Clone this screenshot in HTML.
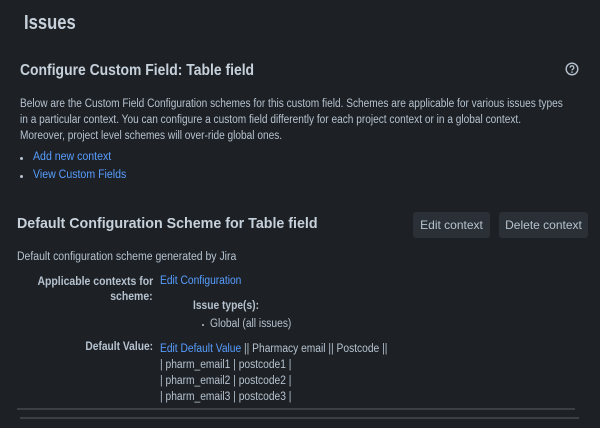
<!DOCTYPE html>
<html><head><style>
body{margin:0;background:#1d2125;width:600px;height:428px;overflow:hidden;font-family:"Liberation Sans",sans-serif;color:#b6c2cf;font-size:11.5px;position:relative}
.a{position:absolute;white-space:nowrap;transform-origin:0 0}
a{color:#579dff;text-decoration:none}
b{font-weight:bold}
.btn{position:absolute;background:#2a3035;border-radius:3px;height:26px;line-height:26px;text-align:center;font-size:12px;color:#b6c2cf}
.dot{position:absolute;width:3px;height:3px;border-radius:50%;background:#b6c2cf}
.r{display:inline-block;transform-origin:100% 0;white-space:nowrap}
</style></head><body>
<div class="a" style="left:24px;top:12px;font-size:20px;font-weight:bold;color:#c7d1db;transform:scaleX(0.83)">Issues</div>
<div class="a" style="left:20px;top:62px;font-size:16px;font-weight:bold;color:#c7d1db;transform:scaleX(0.87)">Configure Custom Field: Table field</div>
<svg class="a" style="left:565px;top:62px" width="14" height="14" viewBox="0 0 14 14"><circle cx="7" cy="7" r="5.8" fill="none" stroke="#b6c2cf" stroke-width="1.4"/><path d="M5.2 5.6a1.8 1.8 0 1 1 2.6 1.6c-.6.3-.8.6-.8 1.2" fill="none" stroke="#b6c2cf" stroke-width="1.3"/><circle cx="7" cy="10.1" r=".8" fill="#b6c2cf"/></svg>
<div class="a" style="left:20px;top:96px;line-height:16px;transform:scaleX(0.88)">Below are the Custom Field Configuration schemes for this custom field. Schemes are applicable for various issues types<br>in a particular context. You can configure a custom field differently for each project context or in a global context.<br>Moreover, project level schemes will over-ride global ones.</div>
<div class="dot" style="left:20px;top:157px"></div><a class="a" style="left:33px;top:151px;transform:scaleX(0.92)">Add new context</a>
<div class="dot" style="left:20px;top:175px"></div><a class="a" style="left:33px;top:169px;transform:scaleX(0.92)">View Custom Fields</a>
<div class="a" style="left:17px;top:215px;font-size:15px;font-weight:bold;color:#c7d1db;transform:scaleX(0.95)">Default Configuration Scheme for Table field</div>
<div class="btn" style="left:413px;top:212px;width:77px">Edit context</div>
<div class="btn" style="left:499px;top:212px;width:89px">Delete context</div>
<div class="a" style="left:17px;top:251px;transform:scaleX(0.91)">Default configuration scheme generated by Jira</div>
<div class="a" style="left:20px;top:275px;width:133px;text-align:right;line-height:15px"><b class="r" style="transform:scaleX(0.91)">Applicable contexts for</b><br><b class="r" style="transform:scaleX(0.91)">scheme:</b></div>
<a class="a" style="left:160px;top:275px;transform:scaleX(0.89)">Edit Configuration</a>
<div class="a" style="left:193px;top:300px;transform:scaleX(0.89)"><b>Issue type(s):</b></div>
<div class="dot" style="left:202px;top:324px;width:2px;height:2px"></div><div class="a" style="left:210px;top:318px;transform:scaleX(0.89)">Global (all issues)</div>
<div class="a" style="left:20px;top:341px;width:133px;text-align:right"><b class="r" style="transform:scaleX(0.89)">Default Value:</b></div>
<div class="a" style="left:160px;top:341px;line-height:16px;transform:scaleX(0.89)"><a>Edit Default Value</a> || Pharmacy email || Postcode ||<br>| pharm_email1 | postcode1 |<br>| pharm_email2 | postcode2 |<br>| pharm_email3 | postcode3 |</div>
<div class="a" style="left:17px;top:408px;width:558px;height:2px;background:#3a4046"></div>
<div class="a" style="left:20px;top:417px;width:559px;height:2px;background:#3a4046"></div>
</body></html>
